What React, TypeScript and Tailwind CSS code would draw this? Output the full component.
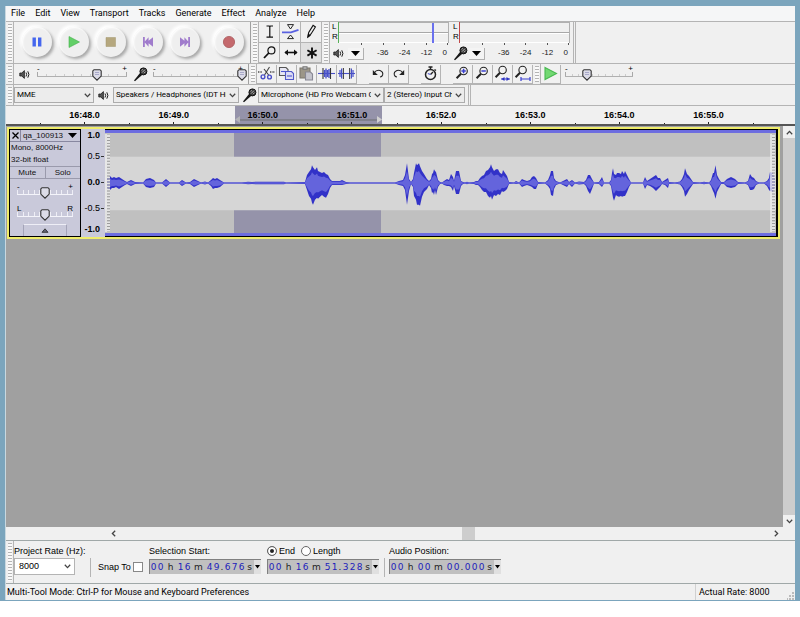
import React, { useState } from "react";

const UI = "font-[Roboto,'Open_Sans',sans-serif]";
const ARIAL = "font-['Liberation_Sans',Arial,sans-serif]";

function Grabber() {
  return (
    <div className="flex w-[8px] shrink-0 justify-center self-stretch border-r border-[#b4b4b4] py-[2px]">
      <div className="w-[4px] bg-[repeating-linear-gradient(to_bottom,#b4b4b4_0px,#b4b4b4_1px,#fafafa_1px,#fafafa_3px)]" />
    </div>
  );
}

function SpeakerIcon() {
  return (
    <svg width="12" height="11" viewBox="0 0 12 11" fill="none" stroke="#1c1c1c" className="shrink-0" aria-hidden="true">
      <path d="M0.8 4h2L5.4 1.6v7.8L2.8 7h-2z" fill="#555" strokeWidth="0.8" />
      <path d="M7 3.5q1.3 2 0 4M8.8 2.3q2.2 3.2 0 6.4" strokeWidth="1" />
    </svg>
  );
}

function MicIcon() {
  return (
    <svg width="15" height="15" viewBox="0 0 15 15" className="shrink-0" aria-hidden="true">
      <path d="M1 13.6L7.4 5.4l2.2 2.2L2 14.2z" fill="#161616" />
      <circle cx="10.4" cy="4.4" r="3.5" fill="#3a3a3a" stroke="#111" />
      <path d="M8.6 3.4l1.2-1M9 5.6l3-3M11 6.2l1.6-1.6" stroke="#ddd" strokeWidth="0.8" />
    </svg>
  );
}

type SliderProps = {
  label: string;
  value: number;
  left?: string;
  right?: string;
  tint?: boolean;
  className: string;
};

function Slider({ label, value, left = "-", right = "+", tint = false, className }: SliderProps) {
  const [v, setV] = useState(value);
  return (
    <div className={`relative flex flex-col ${ARIAL} ${className}`}>
      <div className="flex h-[7px] justify-between text-[8px] leading-[7px] text-black">
        <span>{left}</span>
        <span>{right}</span>
      </div>
      <div className={`relative h-[5px] border-b ${tint ? "border-[#f4f4fa]" : "border-[#b0b0b0]"}`}>
        <div className="flex h-full justify-between">
          {Array.from({ length: 11 }, (_, i) => (
            <i key={i} className={`w-px ${tint ? "h-full bg-[#eeeef6]" : i % 10 ? "mt-[2px] bg-[#cccccc]" : "h-full bg-[#a8a8a8]"}`} />
          ))}
        </div>
        <svg
          className="absolute -top-[3px] -ml-[5px]"
          style={{ left: `${v}%` }}
          width="10"
          height="12"
          viewBox="0 0 10 12"
          aria-hidden="true"
        >
          <path d="M2 0.7h6l1.2 1.2v5.2L5 11.2 0.8 7.1V1.9z" fill="#dcdce8" stroke="#333" strokeWidth="1.1" />
          {!tint && <path d="M3 3.5h4M3 5.5h4" stroke="#9a9ac0" strokeWidth="0.8" />}
        </svg>
      </div>
      <input
        type="range"
        min={0}
        max={100}
        aria-label={label}
        value={v}
        onChange={(e) => setV(Number(e.target.value))}
        className="absolute inset-0 h-full w-full opacity-0"
      />
    </div>
  );
}

function Chevron() {
  return (
    <svg width="7" height="5" viewBox="0 0 7 5" fill="none" stroke="#444" strokeWidth="1.3" aria-hidden="true">
      <path d="M0.8 0.8L3.5 3.6 6.2 0.8" />
    </svg>
  );
}

function Picker({ label, value, className }: { label: string; value: string; className: string }) {
  return (
    <div className={`relative h-[16px] shrink-0 border border-[#acacac] bg-[#ececec] ${className}`}>
      <select
        aria-label={label}
        className={`block h-full w-full appearance-none overflow-hidden pr-[12px] pl-[2px] text-[8px] leading-[14px] text-clip text-black outline-none ${UI}`}
      >
        <option>{value}</option>
      </select>
      <span className="pointer-events-none absolute inset-y-0 right-[2px] flex items-center">
        <Chevron />
      </span>
    </div>
  );
}

function RoundButton({ label, children, className = "" }: { label: string; children: React.ReactNode; className?: string }) {
  return (
    <button
      aria-label={label}
      className={`flex size-[30px] items-center justify-center rounded-full bg-[#efefef] shadow-[2px_2px_3px_#a8a8a8,-2px_-2px_3px_#ffffff,inset_1px_1px_2px_#ffffff] ${className}`}
    >
      <svg width="14" height="14" viewBox="0 0 14 14" aria-hidden="true">
        {children}
      </svg>
    </button>
  );
}

function Transport() {
  return (
    <div className="flex w-[237px] shrink-0 items-center gap-[7px] border-r border-[#a0a0a0] pb-[2px] pl-[8px]">
      <RoundButton label="Pause">
        <path d="M2.5 2.5h3.4v9H2.5zM8 2.5h3.4v9H8z" fill="#4566ee" />
      </RoundButton>
      <RoundButton label="Play">
        <path d="M2 1.5L12.5 7 2 12.5z" fill="#62cf67" stroke="#44ae4c" strokeWidth="0.6" />
      </RoundButton>
      <RoundButton label="Stop">
        <path d="M2 2.5h9.5v9H2z" fill="#b5a77e" stroke="#a3966c" strokeWidth="0.5" />
      </RoundButton>
      <RoundButton label="Skip to Start">
        <path d="M2 2h1.8v4.4L7.6 2.2v3.6l4.4-3.6v9.600L7.600 8.200v3.600L3.800 7.600V12H2z" fill="#a07ccc" />
      </RoundButton>
      <RoundButton label="Skip to End">
        <path d="M12 2h-1.800v4.400L6.400 2.200v3.600L2 2.200v9.600l4.400-3.600v3.600l3.800-4.200V12H12z" fill="#a07ccc" />
      </RoundButton>
      <RoundButton label="Record" className="ml-[7px]">
        <circle cx="7" cy="7" r="5.6" fill="#c4696d" stroke="#a9595c" strokeWidth="0.8" />
      </RoundButton>
    </div>
  );
}

function ToolButton({ label, pressed = false, children }: { label: string; pressed?: boolean; children: React.ReactNode }) {
  return (
    <button
      aria-label={label}
      aria-pressed={pressed}
      className={`flex items-center justify-center border-r border-b border-[#b4b4b4] ${pressed ? "bg-[#e0e0e0]" : "bg-[#f0f0f0]"}`}
    >
      <svg width="19" height="17" viewBox="0 0 19 17" fill="none" stroke="#111" strokeWidth="1.2" aria-hidden="true">
        {children}
      </svg>
    </button>
  );
}

function Tools() {
  return (
    <div className="grid w-[63px] shrink-0 grid-cols-3 grid-rows-2">
      <ToolButton label="Selection Tool">
        <path d="M6.5 3h2.5l.8.6.8-.6h2.4M6.5 14.2h2.5l.8-.6.8.6h2.4M9.8 3.4v10.4" />
      </ToolButton>
      <ToolButton label="Envelope Tool">
        <path d="M1 9.400h9l7.500-2.600" stroke="#5a62e0" strokeWidth="1.8" />
        <path d="M6.5 1.6h6L9.5 6zM6.5 15.600h6L9.5 12z" strokeWidth="0.9" />
      </ToolButton>
      <ToolButton label="Draw Tool">
        <path d="M6 13.8l.7-4.4 4.4-7 2.3 1.6-4.4 7z" strokeWidth="1.1" />
        <path d="M6 13.8l.4-2.4 1.5 1z" fill="#111" />
      </ToolButton>
      <ToolButton label="Zoom Tool">
        <circle cx="11.4" cy="6.4" r="3.5" />
        <path d="M8.8 9L4 14" strokeWidth="1.8" />
      </ToolButton>
      <ToolButton label="Time Shift Tool">
        <path d="M4 8.5h12" strokeWidth="1.6" />
        <path d="M7 5.4v6.2L3.4 8.5zM13 5.4v6.2l3.6-3.1z" fill="#111" stroke="none" />
      </ToolButton>
      <ToolButton label="Multi-Tool Mode" pressed>
        <path d="M10 3.5v11M5.4 6.2l9.2 5.4M14.6 6.2l-9.2 5.4" strokeWidth="1.9" />
      </ToolButton>
    </div>
  );
}

function Meter({ kind }: { kind: "out" | "in" }) {
  const out = kind === "out";
  return (
    <div className={`flex w-[121px] shrink-0 flex-col ${ARIAL} text-[8px]`}>
      <div className="flex">
        <div className="flex w-[8px] flex-col pl-[2px] leading-[10px]">
          <span>L</span>
          <span>R</span>
        </div>
        <div className={`w-px ${out ? "bg-[#58b058]" : "bg-[#c04848]"}`} />
        <div className="relative flex h-[21px] w-[110px] flex-col border-t border-r border-[#b0b0b0] bg-[#efefef]">
          <div className="flex-1 border-b border-[#a8a8a8]" />
          <div className="flex-1 border-t border-b border-white" />
          {out && <div className="absolute inset-y-0 left-[93px] w-[2px] bg-[#6a70ee]" />}
        </div>
      </div>
      <div className="ml-[31px] flex w-[87px] justify-between">
        {[0, 1, 2, 3, 4].map((i) => (
          <i key={i} className="h-[2px] w-px bg-[#555]" />
        ))}
      </div>
      <div className="flex h-[16px] items-center">
        <div className="flex w-[18px] justify-center">{out ? <SpeakerIcon /> : <MicIcon />}</div>
        <button
          aria-label={out ? "Playback meter options" : "Recording meter options"}
          className="mt-[2px] flex h-[12px] w-[16px] items-center justify-center border-r border-b border-[#b0b0b0] bg-[#f4f4f4]"
        >
          <svg width="9" height="5" viewBox="0 0 9 5" aria-hidden="true">
            <path d="M0 0h9L4.500 5z" fill="#000" />
          </svg>
        </button>
        <div className="ml-[13px] flex w-[70px] justify-between leading-[12px] text-[#222]">
          {["-36", "-24", "-12", "0"].map((t) => (
            <span key={t}>{t}</span>
          ))}
        </div>
      </div>
    </div>
  );
}

function EditButton({ label, children }: { label: string; children: React.ReactNode }) {
  return (
    <button aria-label={label} className="flex h-[19px] w-[20px] shrink-0 items-center justify-center border-r border-b border-[#b4b4b4] bg-[#f1f1f1]">
      <svg width="17" height="17" viewBox="0 0 17 17" fill="none" stroke="#222" strokeWidth="1.100" aria-hidden="true">
        {children}
      </svg>
    </button>
  );
}

function Lens() {
  return (
    <>
      <circle cx="9.6" cy="6" r="3.700" />
      <path d="M7 8.800L2.600 13.200" strokeWidth="2" />
    </>
  );
}

function EditBar() {
  return (
    <div className="flex shrink-0 items-center">
      <EditButton label="Cut">
        <path d="M0 7h4M12 7h5" stroke="#777" strokeWidth="2" strokeDasharray="1 .6" />
        <path d="M11.500 2L6.500 10M6 4l5 6.500" stroke="#444" />
        <circle cx="5" cy="11.800" r="1.900" stroke="#4a50c8" strokeWidth="1.400" />
        <circle cx="11.500" cy="12" r="1.900" stroke="#4a50c8" strokeWidth="1.400" />
      </EditButton>
      <EditButton label="Copy">
        <path d="M1.500 2.500h6.500l2 2v6H1.500z" fill="#e8e8f4" stroke="#555" />
        <path d="M3 6.500h5" stroke="#5058d0" />
        <path d="M7.500 6.500h6l2 2v6h-8z" fill="#dcdcf4" stroke="#5058c8" />
        <path d="M9 11h5" stroke="#5058d0" />
      </EditButton>
      <EditButton label="Paste">
        <path d="M2 3h10v10H2z" fill="#9c9688" stroke="#7c786e" />
        <path d="M5 1.800h4v2.400H5z" fill="#bbb" stroke="#777" />
        <path d="M7.500 7h5l2 2v6h-7z" fill="#c4c4cc" stroke="#888894" />
      </EditButton>
      <EditButton label="Trim">
        <path d="M0 8.500h17" stroke="#4850c8" />
        <path d="M5 3v11M12.500 3v11" stroke="#333" />
        <path d="M6.500 5v7M8 3.500v10M9.500 5v7M11 4v9" stroke="#4850c8" strokeWidth="1.300" />
      </EditButton>
      <EditButton label="Silence">
        <path d="M0 8.500h17" stroke="#4850c8" />
        <path d="M2 5v7M3.600 3.500v10M13.400 3.500v10M15 5v7" stroke="#4850c8" strokeWidth="1.200" />
        <path d="M5.400 3v11M11.600 3v11" stroke="#444" />
      </EditButton>
      <div className="flex pl-[12px]">
        <EditButton label="Undo">
          <path d="M4 8q2.500-3.500 6-2.500 3.500 1.300 2.600 4.500-.6 1.800-2.600 2" />
          <path d="M2.800 5v5h5z" fill="#222" stroke="none" />
        </EditButton>
        <EditButton label="Redo">
          <path d="M13 8Q10.500 4.500 7 5.500 3.500 6.800 4.400 10q.6 1.800 2.600 2" />
          <path d="M14.200 5v5h-5z" fill="#222" stroke="none" />
        </EditButton>
      </div>
      <div className="flex pl-[12px]">
        <EditButton label="Sync-Lock">
          <circle cx="8.500" cy="9.500" r="5" strokeWidth="1.500" />
          <path d="M6.500 2h4M8.500 2v2.500M8.500 9.500l2.500-2.500M12.500 4.500l1.500 1" strokeWidth="1.400" />
          <path d="M8.500 9.500L5.800 8.500" stroke="#5058d0" />
        </EditButton>
      </div>
      <div className="flex pl-[12px]">
        <EditButton label="Zoom In">
          <Lens />
          <path d="M7.400 6h4.400M9.600 3.800v4.400" stroke="#3a40d0" strokeWidth="1.500" />
        </EditButton>
        <EditButton label="Zoom Out">
          <Lens />
          <path d="M7.400 6h4.400" stroke="#3a40d0" strokeWidth="1.500" />
        </EditButton>
        <EditButton label="Fit Selection">
          <g transform="translate(-1 -1)">
            <Lens />
          </g>
          <path d="M7 14h9" stroke="#3a40d0" />
          <path d="M10.500 12v4L7.500 14zM12.500 12v4l3-2z" fill="#2a30c0" stroke="none" />
        </EditButton>
        <EditButton label="Fit Project">
          <g transform="translate(-1 -1)">
            <Lens />
          </g>
          <path d="M7 14h9M7 12v4M16 12v4" stroke="#3a40d0" strokeWidth="1.200" />
        </EditButton>
      </div>
    </div>
  );
}

const TIMES = ["16:48.0", "16:49.0", "16:50.0", "16:51.0", "16:52.0", "16:53.0", "16:54.0", "16:55.0"];

function Ruler() {
  return (
    <div className={`relative flex h-[20px] border-b-2 border-[#555] bg-[#f0f0f0] pr-[41px] pl-[34px] ${ARIAL}`}>
      <div className="absolute top-0 left-[229px] h-[18px] w-[147px] bg-[#9593aa]">
        <div className="absolute inset-x-[4px] bottom-[3px] h-[2px] border-y border-[#80808c] bg-[#a8a8ac]" />
        <svg className="absolute bottom-[1px] left-0" width="5" height="7" viewBox="0 0 5 7" aria-hidden="true">
          <path d="M5 0v7L0 3.500z" fill="#b4b4b8" />
        </svg>
        <svg className="absolute right-0 bottom-[1px]" width="5" height="7" viewBox="0 0 5 7" aria-hidden="true">
          <path d="M0 0v7l5-3.500z" fill="#d0d0d0" />
        </svg>
      </div>
      {TIMES.map((t) => (
        <div key={t} className="relative flex flex-1 flex-col items-center justify-between">
          <span className="pt-[3px] text-[9px] leading-[12px] font-bold text-black">{t}</span>
          <span className="h-[2px] w-px bg-[#222]" />
          <i className="absolute bottom-0 left-0 h-px w-px bg-[#222]" />
        </div>
      ))}
      <i className="h-px w-px self-end bg-[#222]" />
    </div>
  );
}

// Envelope samples: [x, peak above the centre line, peak below it].
const WAVE: [number, number, number][] = [
  [107, 5, 5], [110, 7, 7], [112, 5, 5], [114, 6, 5], [116, 5, 4], [119, 6, 6], [122, 4, 4], [125, 2, 2], [127, 1, 1], [131, 3, 3], [135, 1, 1], [143, 0.5, 0.5],
  [146, 4, 4], [150, 5, 5], [154, 3, 4], [156, 0.5, 0.5], [162, 0.5, 0.5], [166, 4, 4], [170, 0.5, 0.5], [179, 0.5, 0.5], [182, 3, 3], [186, 0.5, 0.5],
  [190, 1, 1], [194, 4, 4], [198, 2, 2], [201, 0.5, 0.5], [205, 1.5, 1.5], [208, 0.5, 0.5], [211, 3, 3], [213, 5, 6], [215, 4, 5], [217, 5, 5], [220, 3, 4], [224, 0.5, 0.5],
  [242, 0.5, 0.5], [248, 1.2, 1.2], [252, 1, 1], [256, 1.3, 1.3], [284, 1.3, 1.3], [286, 0.5, 0.5], [305, 1, 1], [307, 8, 7], [309, 11, 13], [311, 14, 16], [312, 18, 20], [313, 16, 22],
  [315, 13, 17], [317, 16, 15], [318, 12, 16], [320, 11, 14], [322, 10, 12], [324, 11, 14], [326, 9, 15], [328, 8, 11], [330, 4, 5], [332, 2, 2], [336, 2, 2], [340, 2, 2], [342, 3, 2],
  [346, 1, 1], [350, 0.5, 0.5], [395, 0.5, 0.5], [399, 2, 2], [403, 3, 3], [405, 8, 7], [407, 20, 22], [409, 4, 8], [411, 1, 1], [413, 4, 4], [414, 10, 13], [416, 20, 17],
  [417, 18, 22], [419, 20, 22], [420, 17, 23], [422, 12, 14], [424, 9, 9], [427, 4, 6], [429, 2, 2], [431, 4, 5], [432, 9, 10], [433, 10, 9], [434, 14, 12], [435, 12, 7], [436, 11, 12], [438, 3, 4],
  [440, 1, 1], [442, 0.5, 0.5], [444, 2, 2], [447, 4, 3], [449, 3, 3], [451, 9, 4], [453, 6, 8], [454, 2, 3], [456, 12, 11], [459, 12, 11], [461, 2, 3], [463, 1, 1], [465, 0.5, 0.5],
  [467, 1.2, 1.2], [469, 0.5, 0.5], [474, 1, 1], [476, 2, 2], [478, 2, 2], [480, 5, 4], [482, 7, 7], [484, 8, 9], [486, 12, 9], [488, 13, 13], [490, 16, 15], [491, 19, 13], [492, 16, 17],
  [494, 12, 12], [496, 14, 13], [498, 14, 11], [500, 10, 12], [502, 9, 8], [503, 13, 9], [505, 10, 8], [507, 7, 6], [509, 1, 1], [514, 0.5, 0.5], [516, 2, 1], [519, 0.5, 0.5],
  [522, 4, 4], [524, 3, 3], [527, 2, 2], [530, 3, 3], [532, 6, 4], [534, 7, 6], [536, 5, 6], [538, 1, 1], [545, 0.5, 0.5], [548, 3, 3], [550, 8, 6], [551, 12, 12], [553, 12, 13], [554, 5, 6],
  [556, 2, 2], [560, 0.5, 0.5], [565, 3, 3], [567, 4, 4], [569, 1, 1], [572, 3, 4], [575, 0.5, 0.5], [579, 1.5, 1.5], [584, 1, 1], [586, 3, 3], [588, 8, 8], [590, 8, 11], [592, 4, 6],
  [594, 0.5, 0.5], [599, 1, 1], [602, 6, 4], [604, 0.5, 0.5], [609, 0.5, 0.5], [611, 3, 3], [612, 10, 9], [613, 15, 15], [614, 9, 18], [616, 8, 12], [617, 10, 13], [619, 10, 14], [621, 9, 13],
  [622, 12, 14], [624, 9, 13], [625, 12, 13], [627, 8, 9], [629, 4, 4], [631, 0.5, 0.5], [643, 0.5, 0.5], [645, 6, 6], [647, 2, 2], [650, 4, 3], [653, 6, 5], [656, 8, 8], [658, 5, 6],
  [660, 5, 4], [662, 1, 1], [665, 3, 2], [668, 5, 5], [669, 1, 1], [675, 0.5, 0.5], [680, 1.5, 1.5], [682, 4, 4], [684, 9, 8], [685, 15, 14], [687, 9, 11], [689, 7, 7], [691, 4, 4], [693, 1, 1],
  [700, 0.5, 0.5], [704, 1.3, 1.3], [709, 0.5, 0.5], [711, 3, 3], [713, 10, 8], [714, 10, 10], [715.5, 18, 16], [717, 8, 9], [719, 4, 5], [721, 1, 1], [724, 1, 1], [727, 4, 4], [731, 6, 5],
  [735, 4, 4], [738, 1, 1], [745, 0.5, 0.5], [748, 2, 2], [750, 9, 7], [752, 6, 7], [754, 5, 6], [756, 2, 2], [759, 0.5, 0.5], [764, 0.5, 0.5], [767, 2, 3], [769, 5, 7], [770, 11, 8],
  [773, 10, 9], [775, 3, 3],
];

function envelope(scale: number) {
  const size = (v: number) => Math.max(0.5, v * scale);
  const top = WAVE.map(([x, u]) => `${x - 105},${53.5 - size(u)}`);
  const bottom = [...WAVE].reverse().map(([x, , d]) => `${x - 105},${53.5 + size(d)}`);
  return [...top, ...bottom].join(" ");
}

function Waveform() {
  return (
    <svg className="block h-full w-full" viewBox="0 0 671 107" preserveAspectRatio="none" role="img" aria-label="Waveform of qa_100913">
      <rect width="671" height="107" fill="#c0c0c0" />
      <rect x="129" width="147" height="107" fill="#9593aa" />
      <rect y="27" width="671" height="54" fill="#d6d6d6" />
      <rect width="671" height="3" fill="#6c6ce0" />
      <rect y="104" width="671" height="3" fill="#6c6ce0" />
      <polygon points={envelope(1)} fill="#3232c8" />
      <polygon points={envelope(0.6)} fill="#6464dc" />
      {[1, 666].map((x) => (
        <g key={x}>
          <path d={`M${x} 4v99`} stroke="#ececec" strokeWidth="1.500" />
          <path d={`M${x + 2.5} 5v97`} stroke="#e4e4e4" strokeWidth="3" strokeDasharray="2 1" />
          <path d={`M${x + 2.5} 7v95`} stroke="#9c9c9c" strokeWidth="3" strokeDasharray="1 2" />
        </g>
      ))}
    </svg>
  );
}

function Track() {
  return (
    <section className="flex h-[112px] border-2 border-[#efed6c] bg-[#c9c9da]">
      <div className={`flex w-[72px] shrink-0 flex-col border-t border-r border-b border-l border-black text-[8px] text-[#111] ${ARIAL}`}>
        <div className="flex h-[12px] items-center border-b border-[#8888a0]">
          <button aria-label="Close track" className="flex h-full w-[11px] items-center justify-center border-r border-[#8888a0]">
            <svg width="7" height="7" viewBox="0 0 7 7" stroke="#000" strokeWidth="1.300" aria-hidden="true">
              <path d="M0.500 0.500l6 6M6.500 0.500l-6 6" />
            </svg>
          </button>
          <button className="flex h-full flex-1 items-center justify-between pr-[3px] pl-[2px]">
            <span>qa_100913</span>
            <svg width="9" height="5" viewBox="0 0 9 5" aria-hidden="true">
              <path d="M0 0h9L4.500 5z" fill="#000" />
            </svg>
          </button>
        </div>
        <p className="pl-px leading-[12px]">Mono, 8000Hz</p>
        <p className="pl-px leading-[12px]">32-bit float</p>
        <div className="flex h-[13px] border-y border-[#9a9aac]">
          <button className="flex-1 border-r border-[#9a9aac] leading-[11px]">Mute</button>
          <button className="flex-1 leading-[11px]">Solo</button>
        </div>
        <Slider label="Gain" value={50} tint className="mx-[7px] mt-[4px]" />
        <Slider label="Pan" value={50} left="L" right="R" tint className="mx-[7px] mt-[10px]" />
        <button
          aria-label="Collapse track"
          className="mx-[13px] mt-auto flex h-[12px] items-center justify-center border-t border-r border-l border-[#a4a4b8] border-t-[#eeeef6]"
        >
          <svg width="8" height="5" viewBox="0 0 8 5" aria-hidden="true">
            <path d="M1 4.300h6L4 0.800z" fill="#667" stroke="#222" strokeWidth="0.800" />
          </svg>
        </button>
      </div>
      <div className={`flex w-[24px] shrink-0 flex-col pt-px text-[9px] leading-[10px] text-black ${ARIAL}`}>
        {[
          { text: "1.0", cls: "font-bold" },
          { text: "0.5", cls: "mt-[11px]", tick: true },
          { text: "0.0", cls: "mt-[16px] font-bold", tick: true },
          { text: "-0.5", cls: "mt-[16px]", tick: true },
          { text: "-1.0", cls: "mt-[11px] font-bold" },
        ].map(({ text, cls, tick }) => (
          <div key={text} className={`flex items-center justify-end gap-px pr-px ${cls}`}>
            <span>{text}</span>
            <i className={`h-px w-[3px] ${tick ? "bg-[#333]" : ""}`} />
          </div>
        ))}
      </div>
      <div className="min-w-0 flex-1 border-t border-r-2 border-b border-black">
        <Waveform />
      </div>
    </section>
  );
}

function Digit({ value, label }: { value: string; label: string }) {
  return <input aria-label={label} defaultValue={value} maxLength={1} className="w-[7px] bg-transparent p-0 text-center text-[#2222bb] outline-none" />;
}

function TimeBox({ label, h, m, s, ms }: { label: string; h: string; m: string; s: string; ms: string }) {
  const digits = (text: string, unit: string) =>
    text.split("").map((d, i) => <Digit key={unit + i} value={d} label={`${label} ${unit} digit ${i + 1}`} />);
  return (
    <div
      role="group"
      aria-label={label}
      className="flex h-[15px] w-[112px] shrink-0 items-center border-t border-l border-[#808080] bg-[#c0c0c0] font-['DejaVu_Sans',sans-serif] text-[9px] leading-[13px] text-[#222]"
    >
      {digits(h, "hours")}
      <span className="w-[13px] text-center">h</span>
      {digits(m, "minutes")}
      <span className="w-[15px] text-center">m</span>
      {digits(s, "seconds")}
      <span className="w-[4px] text-center">.</span>
      {digits(ms, "milliseconds")}
      <span className="w-[9px] text-center">s</span>
      <button aria-label={`${label} format`} className="flex h-full flex-1 items-center justify-center bg-[#e0e0e0]">
        <svg width="5" height="4" viewBox="0 0 5 4" aria-hidden="true">
          <path d="M0 0h5L2.500 3.500z" fill="#000" />
        </svg>
      </button>
    </div>
  );
}

function SelectionBar() {
  return (
    <div className={`flex h-[43px] border-t border-[#a0a8a8] bg-[#f0f0f0] text-[9px] leading-[12px] text-black ${ARIAL}`}>
      <Grabber />
      <div className="w-[76px] pt-[4px]">
        <label htmlFor="rate">Project Rate (Hz):</label>
        <div className="relative mt-[1px] h-[17px] w-[61px] border border-[#b4b4b4] bg-white">
          <select id="rate" className="block h-full w-full appearance-none pl-[4px] text-[9px] leading-[15px] outline-none">
            <option>8000</option>
          </select>
          <span className="pointer-events-none absolute inset-y-0 right-[3px] flex items-center">
            <Chevron />
          </span>
        </div>
      </div>
      <div className="mt-[17px] h-[19px] w-px bg-[#b4b4b4]" />
      <div className="w-[58px] pt-[20px] pl-[7px]">
        <label className="flex items-center gap-[2px] whitespace-nowrap">
          Snap To
          <input type="checkbox" className="size-[10px] shrink-0 appearance-none border border-[#888] bg-white" />
        </label>
      </div>
      <div className="w-[118px] pt-[4px]">
        <p>Selection Start:</p>
        <div className="pt-[2px]">
          <TimeBox label="Selection Start" h="00" m="16" s="49" ms="676" />
        </div>
      </div>
      <fieldset className="w-[117px] pt-[4px]">
        <div className="flex gap-[6px]">
          {["End", "Length"].map((t, i) => (
            <label key={t} className="flex items-center gap-[2px]">
              <input
                type="radio"
                name="range-mode"
                defaultChecked={i === 0}
                className="size-[10px] appearance-none rounded-full border border-[#666] bg-white checked:bg-[#222] checked:shadow-[inset_0_0_0_2px_#fff]"
              />
              {t}
            </label>
          ))}
        </div>
        <div className="pt-[2px]">
          <TimeBox label="Selection End" h="00" m="16" s="51" ms="328" />
        </div>
      </fieldset>
      <div className="mt-[17px] h-[19px] w-px bg-[#b4b4b4]" />
      <div className="pt-[4px] pl-[4px]">
        <p>Audio Position:</p>
        <div className="pt-[2px]">
          <TimeBox label="Audio Position" h="00" m="00" s="00" ms="000" />
        </div>
      </div>
    </div>
  );
}

const MENUS = ["File", "Edit", "View", "Transport", "Tracks", "Generate", "Effect", "Analyze", "Help"];

export default function App() {
  return (
    <div className="min-h-screen bg-white">
      <div className="bg-[#7ba5bd] px-[5px] pt-[6px] pb-px">
        <main className="flex flex-col border-l border-[#c8d8e0] bg-[#f0f0f0]">
          <nav className={`flex h-[15px] items-center gap-[10px] bg-[#f5f6f7] pl-[5px] text-[9px] leading-[15px] text-black ${UI}`}>
            {MENUS.map((m) => (
              <button key={m}>{m}</button>
            ))}
          </nav>

          <div className="flex h-[42px] border-t border-[#b4b4b4]">
            <Grabber />
            <Transport />
            <Grabber />
            <Tools />
            <Grabber />
            <Meter kind="out" />
            <Meter kind="in" />
            <div className="ml-px w-[3px] border-x border-[#b4b4b4]" />
          </div>

          <div className="flex h-[21px] items-center border-t border-[#b4b4b4]">
            <Grabber />
            <div className="flex w-[235px] shrink-0 items-center self-stretch border-r border-[#a0a0a0] pl-[5px]">
              <SpeakerIcon />
              <Slider label="Output Volume" value={67} className="mt-px ml-[6px] w-[90px] self-start" />
              <span className="ml-[6px]">
                <MicIcon />
              </span>
              <Slider label="Input Volume" value={99} className="mt-px ml-[5px] w-[90px] self-start" />
            </div>
            <Grabber />
            <EditBar />
            <Grabber />
            <EditButton label="Play at Speed">
              <path d="M3 2.500L14.500 8.500 3 14.500z" fill="#72d872" stroke="#48b850" />
            </EditButton>
            <Slider label="Playback Speed" value={32} className="mt-px ml-[4px] w-[68px] self-start" />
          </div>

          <div className="flex h-[21px] items-center border-t border-[#b4b4b4]">
            <Grabber />
            <Picker label="Audio Host" value="MME" className="w-[80px]" />
            <span className="ml-[4px]">
              <SpeakerIcon />
            </span>
            <Picker label="Output Device" value="Speakers / Headphones (IDT High Definition)" className="ml-[3px] w-[126px]" />
            <span className="ml-[3px]">
              <MicIcon />
            </span>
            <Picker label="Input Device" value="Microphone (HD Pro Webcam C920)" className="ml-px w-[126px]" />
            <Picker label="Input Channels" value="2 (Stereo) Input Channels" className="w-[81px]" />
            <div className="ml-[3px] w-[3px] self-stretch border-x border-[#b4b4b4]" />
          </div>

          <div className="border-t border-[#b4b4b4]">
            <Ruler />
          </div>

          <div className="flex h-[401px] bg-[#a0a0a0]">
            <div className="min-w-0 flex-1 pt-[1px] pr-[3px] pl-px">
              <Track />
            </div>
            <div className="flex w-[12px] shrink-0 flex-col items-center justify-between bg-[#f0f0f0]">
              <button aria-label="Scroll up" className="flex h-[12px] items-center">
                <span className="rotate-180">
                  <Chevron />
                </span>
              </button>
              <div className="w-full flex-1 bg-[#cdcdcd]" />
              <button aria-label="Scroll down" className="flex h-[12px] items-center">
                <Chevron />
              </button>
            </div>
          </div>

          <div className="flex h-[13px] items-center bg-[#f0f0f0] pr-[15px] pl-[104px]">
            <button aria-label="Scroll left" className="rotate-90">
              <Chevron />
            </button>
            <div className="h-full flex-[344]" />
            <div className="h-full w-[13px] bg-[#cdcdcd]" />
            <div className="h-full flex-[298]" />
            <button aria-label="Scroll right" className="-rotate-90">
              <Chevron />
            </button>
          </div>

          <SelectionBar />

          <footer className={`flex h-[17px] items-center border-t border-[#a0a8a8] pl-px text-[9px] leading-[16px] text-black ${UI}`}>
            <span className="flex-1">Multi-Tool Mode: Ctrl-P for Mouse and Keyboard Preferences</span>
            <span className="h-full w-[92px] border-l border-[#d0d0d0] pl-[3px]">Actual Rate: 8000</span>
            <svg className="self-end" width="8" height="8" viewBox="0 0 8 8" fill="#bbb" aria-hidden="true">
              <path d="M5 0h2v2H5zM5 3h2v2H5zM5 6h2v2H5zM2 3h2v2H2zM2 6h2v2H2zM-1 6h2v2h-2z" />
            </svg>
          </footer>
        </main>
      </div>
    </div>
  );
}
